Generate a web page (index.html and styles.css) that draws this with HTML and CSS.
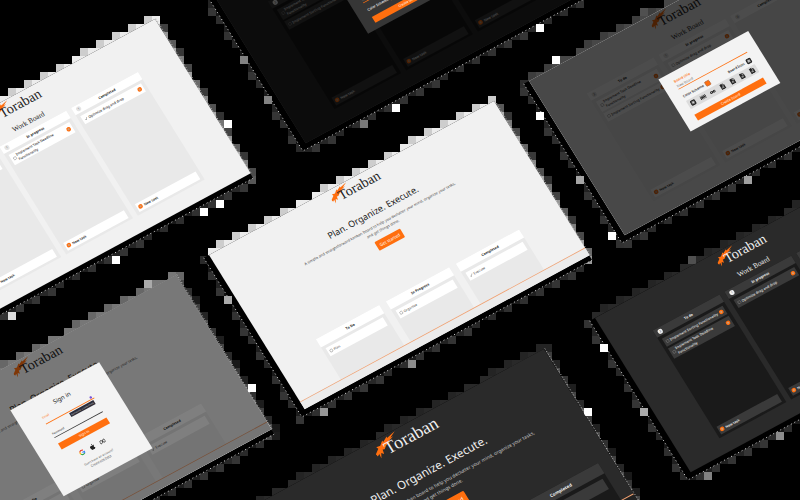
FILE: index.html
```html
<!DOCTYPE html>
<html lang="en">
<head>
<meta charset="utf-8">
<title>Toraban</title>
<meta name="viewport" content="width=device-width, initial-scale=1">
<link rel="stylesheet" href="styles.css">
</head>
<body>
<main class="canvas" id="canvas">
  <svg class="fringe" id="fringe" aria-hidden="true"></svg>
</main>

<svg class="sprites" aria-hidden="true">
  <symbol id="bird" viewBox="0 0 90 56">
    <path d="M0 36 L16 24 L13 17 L26 19 L40 7 L40 13 L58 3 L57 8 L89 0 L66 12 L76 12 L52 20 L60 22 L42 27 L32 35 L26 33 L23 47 L17 40 L8 56 L10 40 L2 45 Z"/>
  </symbol>
  <symbol id="google" viewBox="0 0 24 24">
    <path fill="none" stroke="#ea4335" stroke-width="4.5" d="M4.5 8 A9 9 0 0 1 18.5 6"/>
    <path fill="none" stroke="#fbbc05" stroke-width="4.5" d="M4.5 16.500 A9 9 0 0 1 4.500 8"/>
    <path fill="none" stroke="#34a853" stroke-width="4.5" d="M18 18.500 A9 9 0 0 1 4.500 16.500"/>
    <path fill="none" stroke="#4285f4" stroke-width="4.5" d="M12.500 12.500 H21 A9 9 0 0 1 18 18.500"/>
  </symbol>
  <symbol id="apple" viewBox="0 0 24 24">
    <path d="M16 1c.2 2.400-2 5-4.300 4.900C11.500 3.500 13.700 1.200 16 1zM20.500 17.500c-1 2.600-2.800 5.300-4.600 5.300-1.500 0-2-.9-3.700-.9s-2.300.9-3.700.9C5.800 22.800 3 17 3 13c0-4 2.500-6.300 5-6.300 1.700 0 3 1.100 4.100 1.100 1 0 2.600-1.200 4.700-1.200 1.400 0 2.800.7 3.600 1.900-3.700 2.200-3 7.400.1 9z"/>
  </symbol>
  <symbol id="meta" viewBox="0 0 28 24">
    <path fill="none" stroke="currentColor" stroke-width="3" d="M2 15C2 9 5 5 8 5c5 0 8 14 13 14 3 0 5-2 5-6 0-5-2-8-5-8-5 0-8 14-14 14-3 0-5-1-5-4z"/>
  </symbol>
  <symbol id="tile" viewBox="0 0 24 24">
    <rect x="2" y="2" width="20" height="20" rx="5"/>
    <path fill="none" stroke="#ddd" stroke-width="2" d="M7 7l10 10M17 7L7 17M12 6v12M6 12h12"/>
  </symbol>
  <symbol id="bars" viewBox="0 0 24 24">
    <path fill="none" stroke="currentColor" stroke-width="3" d="M2 5v14M7 5v14M12 5v14M17 5v14M22 5v14M2 12h20"/>
  </symbol>
  <symbol id="goggles" viewBox="0 0 24 24">
    <circle cx="6" cy="12" r="5"/><circle cx="18" cy="12" r="5"/><path d="M6 9h12v6H6z"/>
    <circle cx="6" cy="12" r="2" fill="#ddd"/><circle cx="18" cy="12" r="2" fill="#ddd"/>
  </symbol>
  <symbol id="file" viewBox="0 0 24 24">
    <path d="M4 1h11l6 6v16H4z"/>
    <path fill="none" stroke="#ddd" stroke-width="2" d="M14 2v6h6M8 13h8M8 18l4-3 4 3"/>
  </symbol>
</svg>
<script src="app.js"></script>
</body>
</html>
```
FILE: styles.css
```css
* { box-sizing: border-box; }

body {
  margin: 0;
  background: #000;
  font-family: "Noto Sans", "Liberation Sans", sans-serif;
}

.canvas {
  position: relative;
  min-height: 100vh;
  overflow: hidden;
}

.fringe {
  position: absolute;
  inset: 0;
  width: 100%;
  height: 100%;
}

.sprites { position: absolute; width: 0; height: 0; }

/* One mock screen lying on the tilted plane */
.screen {
  --bg: #f1f1f1;
  --column: #e9e9e9;
  --surface: #fff;
  --foot: #ebebeb;
  --ink: #222;
  --muted: #444;
  --badge: #e4e4e4;
  --accent: #ff6f0f;
  position: absolute;
  width: 1296px;
  height: 725px;
  overflow: hidden;
  background: var(--bg);
  color: var(--ink);
  transform-origin: 0 0;
  transform: rotate(-28.400deg) skewX(3.400deg) scale(0.25);
}

.dark {
  --bg: #2a2a2a;
  --column: #1a1a1a;
  --surface: #3a3a3a;
  --foot: #222;
  --ink: #f0f0f0;
  --muted: #ccc;
  --badge: #f0f0f0;
}

.at-left { left: -130px; top: 173px; }
.at-top { left: 210px; top: -11px; }
.at-center { left: 209px; top: 255px; }
.at-upper-right { left: 529px; top: 81px; }
.at-right { left: 595px; top: 318px; }
.at-lower-left { left: -109px; top: 429px; }
/* a narrower window, so its content is larger */
.at-bottom {
  left: 259px;
  top: 503px;
  width: 1012px;
  height: 566px;
  transform: rotate(-28.400deg) skewX(3.400deg) scale(0.32);
}

.logo {
  position: relative;
  height: 80px;
  padding: 8px 0 0 20px;
  font: 56px/64px "Liberation Serif", serif;
}
.logo svg {
  position: absolute;
  left: -14px;
  top: 4px;
  width: 90px;
  height: 56px;
  fill: var(--accent);
}
.logo span { position: relative; }

h1, h2, h3, p, ul { margin: 0; padding: 0; font-weight: 400; }
ul { list-style: none; }

/* Landing */
.landing { height: 100%; display: flex; flex-direction: column; align-items: center; }
.landing h1 { padding-top: 58px; font-size: 36px; line-height: 48px; }
.landing p { padding-top: 16px; text-align: center; font-size: 15px; line-height: 24px; color: var(--muted); white-space: nowrap; }
.landing .cta { margin-top: 20px; width: 116px; height: 40px; flex: none; font-size: 17px; border-radius: 4px; }
.landing .columns { flex: 1; padding-top: 190px; gap: 30px; }
.at-bottom .columns { padding-top: 84px; }
.landing .column { width: 288px; }
.landing .bar { height: 38px; }
.landing .foot { align-self: stretch; height: 36px; border-top: 3px solid #f0a070; background: var(--foot); }

button {
  border: 0;
  padding: 0;
  background: var(--accent);
  color: #fff;
  font-family: inherit;
}

/* Board */
.board { display: flex; flex-direction: column; align-items: center; }
.board h1 { height: 74px; padding-top: 20px; font: 29px/40px "Liberation Serif", serif; }
.columns { display: flex; gap: 22px; justify-content: center; }
.column { display: flex; flex-direction: column; width: 304px; background: var(--column); }
.board .column { height: 506px; }
.bar {
  display: flex;
  align-items: center;
  height: 34px;
  padding: 0 14px;
  background: var(--surface);
  font-size: 14px;
}
.bar h3 { flex: 1; text-align: center; font-size: 14px; font-weight: 700; }
.count {
  width: 20px;
  margin-right: -20px;
  border-radius: 50%;
  background: var(--badge);
  color: #333;
  font-size: 12px;
  line-height: 20px;
  text-align: center;
}
.tasks { flex: 1; display: flex; flex-direction: column; gap: 8px; padding: 12px 14px; }
.task {
  display: flex;
  align-items: center;
  min-height: 38px;
  padding: 2px 8px;
  background: var(--surface);
  font-size: 14px;
  line-height: 22px;
  color: var(--muted);
}
.board .task { color: var(--ink); font-weight: 500; }
.task label { flex: 1; max-width: 230px; padding-left: 4px; }
.task input {
  appearance: none;
  width: 14px;
  height: 14px;
  margin: 0;
  border: 2px solid #888;
  border-radius: 50%;
}
.task input:checked {
  width: 6px;
  height: 12px;
  margin: 0 4px;
  border-width: 0 2px 2px 0;
  border-radius: 0;
  transform: rotate(40deg);
}
.dot { width: 18px; height: 18px; margin-left: auto; border: 5px solid var(--accent); border-radius: 50%; background: #c9a080; }
.new-task {
  display: flex;
  align-items: center;
  gap: 6px;
  height: 36px;
  margin: 0 14px 10px;
  padding: 0 6px;
  background: var(--surface);
  color: var(--ink);
  font-size: 14px;
  font-weight: 600;
}
.new-task .dot { margin: 0; }

/* Dialogs */
.overlay {
  position: absolute;
  inset: 0;
  display: flex;
  align-items: center;
  justify-content: center;
  background: rgba(0, 0, 0, 0.7);
}
.overlay.soft { background: rgba(0, 0, 0, 0.5); }
.dialog { width: 408px; background: #f3f3f3; color: #222; }
.dark .dialog { background: #363636; color: #eee; }
.dialog input {
  display: block;
  width: 100%;
  border: 0;
  border-bottom: 3px solid #333;
  padding: 0;
  background: none;
  color: inherit;
  font-family: inherit;
}
.dialog input.active { border-color: var(--accent); }
.dialog label.active { color: var(--accent); }

.new-board { padding: 28px 48px 24px; font-size: 14px; font-weight: 600; }
.new-board label { display: block; line-height: 20px; }
.new-board input { height: 26px; font-size: 14px; color: #777; }
.options { display: flex; justify-content: space-between; align-items: center; padding: 20px 0 8px; line-height: 24px; }
.options span { display: flex; align-items: center; gap: 8px; }
.swatch { width: 22px; height: 22px; border: 3px solid #b86a3a; background: var(--accent); border-radius: 4px; }
.icons { display: flex; justify-content: space-around; align-items: center; height: 38px; background: #dcdcdc; border-radius: 4px; }
.dialog svg { width: 26px; height: 26px; fill: currentColor; }
.dialog button { display: block; width: 100%; height: 28px; margin-top: 26px; font-size: 14px; }
.dark .dialog button { margin-top: 12px; }

.sign-in { width: 404px; height: 404px; padding: 36px 92px; font-size: 12px; }
.sign-in h2 { font-size: 24px; line-height: 34px; text-align: center; }
.sign-in label { display: block; line-height: 16px; padding-top: 10px; }
.sign-in input { height: 22px; font-size: 12px; }
.tooltip-anchor { position: relative; }
.tooltip {
  position: absolute;
  right: 8px;
  bottom: -22px;
  width: 110px;
  background: #2b2b38;
  color: #ccc;
  font-size: 10px;
  line-height: 18px;
  text-align: center;
}
.spark { position: absolute; right: 6px; bottom: 5px; width: 10px; height: 10px; border-radius: 50%; background: #7a55d8; }
.sign-in .password { padding-top: 38px; }
.sign-in .password + input { height: 10px; }
.sign-in button { margin-top: 26px; }
.social { display: flex; justify-content: center; gap: 20px; padding: 36px 0 28px; }
.sign-in p { text-align: center; line-height: 16px; color: #555; }
.sign-in a { color: inherit; }
```
FILE: app.js
```js
const logo = `<div class="logo"><svg><use href="#bird"/></svg><span>Toraban</span></div>`;
let nextId = 0;

function task([text, done], dot) {
  const id = `task-${nextId++}`;
  return `<li class="task"><input type="checkbox" id="${id}"${done ? " checked" : ""}>
    <label for="${id}">${text}</label>${dot ? '<i class="dot"></i>' : ""}</li>`;
}

function landing() {
  const columns = [["To Do", ["Plan"]], ["In Progress", ["Organize"]], ["Completed", ["Execute", true]]];
  return `<div class="landing">${logo}
    <h1>Plan. Organize. Execute.</h1>
    <p>A simple and straightforward kanban board to help you declutter your mind, organize your tasks,<br>and get things done.</p>
    <button class="cta">Get started</button>
    <div class="columns">${columns.map(([name, item]) => `
      <section class="column"><div class="bar"><h3>${name}</h3></div>
      <ul class="tasks">${task(item)}</ul></section>`).join("")}</div>
    <div class="foot"></div></div>`;
}

function board(lists) {
  const names = ["To do", "In progress", "Completed"];
  return `<div class="board">${logo}<h1>Work Board</h1>
    <div class="columns">${lists.map((items, i) => `
      <section class="column">
        <div class="bar"><span class="count">${items.length}</span><h3>${names[i]}</h3></div>
        <ul class="tasks">${items.map(item => task(item, true)).join("")}</ul>
        <button class="new-task"><i class="dot"></i>New task</button>
      </section>`).join("")}</div></div>`;
}

function newBoard(withIcons) {
  const id = `title-${nextId++}`;
  const glyphs = ["tile", "bars", "goggles", "file", "file", "file", "file"];
  const icon = name => `<svg><use href="#${name}"/></svg>`;
  return `<div class="overlay"><form class="dialog new-board">
    <label class="active" for="${id}">Board title</label>
    <input class="active" id="${id}" value="New Board">
    <div class="options"><span>Color Scheme <i class="swatch"></i></span>
    ${withIcons ? `<span>Board Icon ${icon("tile")}</span>` : ""}</div>
    ${withIcons ? `<div class="icons">${glyphs.map(icon).join("")}</div>` : ""}
    <button type="button">Create board</button></form></div>`;
}

function signIn() {
  return `<div class="overlay soft"><form class="dialog sign-in">
    <h2>Sign in</h2>
    <label class="active" for="email">Email</label>
    <div class="tooltip-anchor"><input class="active" id="email" type="email">
      <i class="spark"></i><span class="tooltip">Generate a new mask</span></div>
    <label class="password" for="password">Password</label>
    <input id="password" type="password">
    <button type="button">Sign in</button>
    <div class="social"><svg><use href="#google"/></svg><svg><use href="#apple"/></svg><svg><use href="#meta"/></svg></div>
    <p>Don't have an account?</p><p><a href="#">Create one here</a></p></form></div>`;
}

const deadline = ["Implement Task Deadline Functionality"];
const sorting = ["Implement Sorting Functionality"];
const drag = ["Optimize drag and drop"];
const dragDone = ["Optimize drag and drop", true];

// place, theme, origin of the top-left corner, shade of the fringe, content
const screens = [
  ["at-left", "", [-130, 173], 241, board([[sorting], [deadline], [dragDone]])],
  ["at-top", "dark", [210, -11], 30, board([[deadline, sorting], [drag], []]) + newBoard(false)],
  ["at-center", "", [209, 255], 241, landing()],
  ["at-upper-right", "", [529, 81], 72, board([[deadline, sorting], [drag], []]) + newBoard(true)],
  ["at-right", "dark", [595, 318], 42, board([[sorting, deadline], [drag], []])],
  ["at-lower-left", "", [-109, 429], 121, landing() + signIn()],
  ["at-bottom", "dark", [259, 503], 42, landing()],
];

document.getElementById("canvas").insertAdjacentHTML("beforeend",
  screens.map(([place, theme, , , html]) => `<article class="screen ${place} ${theme}">${html}</article>`).join(""));

// Blocky fringe on an 8px grid around every screen
const CELL = 8;
const X = [285, -154];
const Y = [95, 154];
const svg = [];
const rect = (x, y, v) => svg.push(`<rect x="${x}" y="${y}" width="${CELL}" height="${CELL}" fill="rgb(${v},${v},${v})"/>`);

// Share of a cell that lies inside the screen grown by pad on its left and bottom sides
function coverage(cx, cy, [ox, oy], pad) {
  const det = X[0] * Y[1] - X[1] * Y[0];
  let hits = 0;
  for (let i = 0; i < CELL; i++) {
    for (let j = 0; j < CELL; j++) {
      const dx = cx + i + 0.5 - ox, dy = cy + j + 0.5 - oy;
      const u = (dx * Y[1] - dy * Y[0]) / det;
      const v = (dy * X[0] - dx * X[1]) / det;
      if (u >= -pad / 324 && u <= 1 && v >= 0 && v <= 1 + pad / 181) hits++;
    }
  }
  return hits / (CELL * CELL);
}

for (const [, , origin, shade] of screens) {
  const [ox, oy] = origin;
  for (let cy = -8; cy < 504; cy += CELL) {
    for (let cx = -8; cx < 808; cx += CELL) {
      const share = coverage(cx, cy, origin, 6);
      if (share <= 0 || share >= 1) continue;
      const dx = cx + 4 - ox, dy = cy + 4 - oy;
      const det = X[0] * Y[1] - X[1] * Y[0];
      const u = (dx * Y[1] - dy * Y[0]) / det, v = (dy * X[0] - dx * X[1]) / det;
      const upper = v < 0.03 && u > -0.01;
      const right = u > 0.98;
      if (upper) rect(cx, cy, Math.round(shade * (share < 0.25 ? 0.85 : 0.98)));
      else if (right) rect(cx, cy, Math.round(Math.max(shade, 120) * (0.2 + 0.6 * share)));
      else rect(cx, cy, Math.round(14 + 40 * (1 - share)));
    }
  }
  // dark band under the left and bottom sides, closed by a dotted line
  const at = (u, v) => [ox + X[0] * u + Y[0] * v, oy + X[1] * u + Y[1] * v].join(",");
  const l = -6 / 324, b = 1 + 6 / 181;
  svg.push(`<polygon fill="#000" points="${at(l, 0)} ${at(l, b)} ${at(1, b)} ${at(1, 0)}"/>`);
  svg.push(`<polyline fill="none" stroke="#ddd" stroke-dasharray="1 3" points="${at(l, 0)} ${at(l, b)} ${at(1, b)}"/>`);
  svg.push(`<polyline fill="none" stroke="#bbb" stroke-dasharray="1 2" points="${at(1.003, 0)} ${at(1.003, 1)}"/>`);
}

const blocks = [
  [224, 120, 255], [216, 200, 255], [200, 208, 255], [112, 256, 255], [8, 312, 220],
  [392, 104, 255], [536, 112, 255], [576, 176, 165], [248, 384, 255], [408, 360, 140],
  [320, 408, 150], [224, 296, 170], [536, 24, 255], [552, 56, 255], [608, 232, 255],
  [744, 176, 160], [600, 344, 255], [584, 408, 255], [640, 408, 170], [704, 472, 130],
  [776, 432, 140], [144, 280, 170], [240, 56, 130], [264, 96, 130], [360, 120, 120],
  [640, 8, 80], [688, 256, 80],
];
blocks.forEach(([x, y, v]) => rect(x, y, v));
document.getElementById("fringe").innerHTML = svg.join("");
```
